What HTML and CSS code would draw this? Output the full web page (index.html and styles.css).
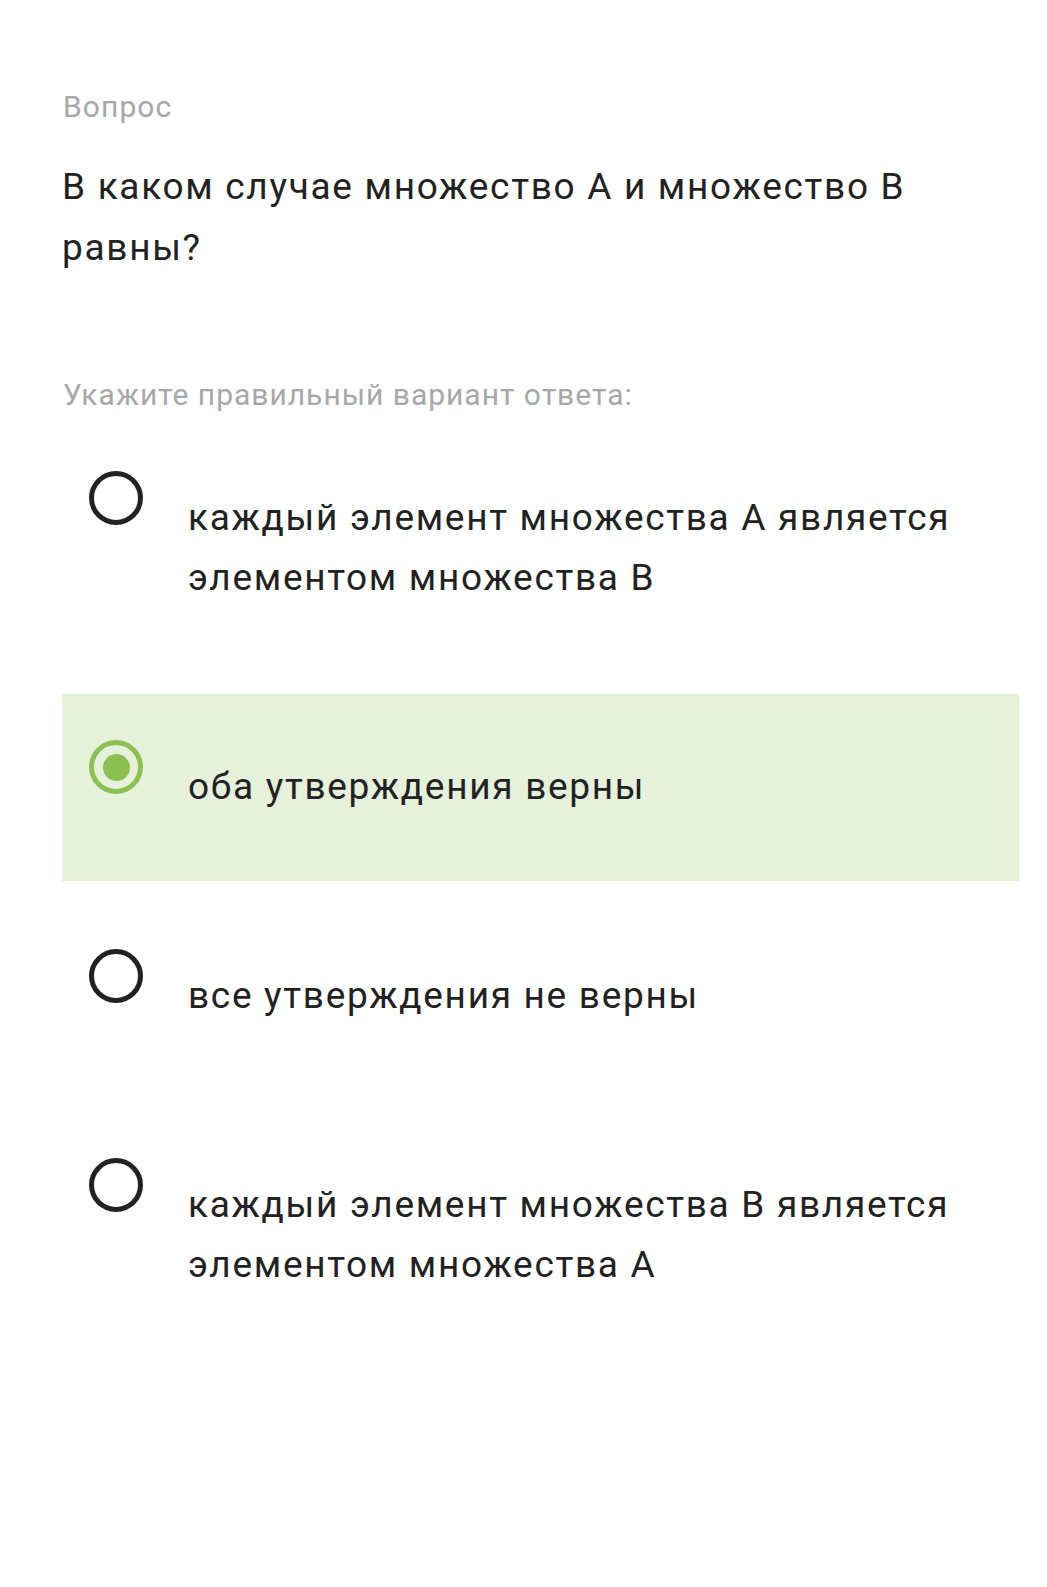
FILE: index.html
```html
<!DOCTYPE html>
<html>
<head>
    <title>Вопрос</title>
    <link rel="stylesheet" href="styles.css">
</head>
<body>
    <div class="page">
        <div class="caption">Вопрос</div>
        <div class="question">В каком случае множество А и множество В равны?</div>
        <div class="hint">Укажите правильный вариант ответа:</div>

        <div class="options">
            <div class="option">
                <span class="radio"></span>
                <div class="option-text">каждый элемент множества А является элементом множества В</div>
            </div>
            <div class="option selected">
                <span class="radio"></span>
                <div class="option-text">оба утверждения верны</div>
            </div>
            <div class="option">
                <span class="radio"></span>
                <div class="option-text">все утверждения не верны</div>
            </div>
            <div class="option">
                <span class="radio"></span>
                <div class="option-text">каждый элемент множества В является элементом множества А</div>
            </div>
        </div>
    </div>
</body>
</html>
```

FILE: styles.css
```css
body {
    margin: 0;
    background: #fff;
    font-family: Roboto, "Noto Sans", sans-serif;
    color: #222;
}
.page {
    padding: 89px 28px 0 62px;
}
.caption {
    font-size: 30px;
    line-height: 36px;
    letter-spacing: 1.1px;
    color: #a8a8a8;
    padding-left: 1px;
}
.question {
    margin-top: 31px;
    font-size: 37px;
    line-height: 61px;
    letter-spacing: 1.7px;
}
.hint {
    margin-top: 99px;
    font-size: 30px;
    line-height: 36px;
    letter-spacing: 1px;
    color: #a8a8a8;
    padding-left: 1px;
}
.options {
    margin-top: 12px;
    display: flex;
    flex-direction: column;
    gap: 22px;
}
.option {
    display: flex;
    align-items: flex-start;
    gap: 45px;
    padding: 46px 20px 64px 27px;
}
.option.selected {
    background-color: #e6f1db;
}
.radio {
    flex: none;
    width: 54px;
    height: 54px;
    box-sizing: border-box;
    border: 5px solid #222;
    border-radius: 50%;
    position: relative;
}
.option.selected .radio {
    border-color: #8cc152;
}
.option.selected .radio::after {
    content: "";
    position: absolute;
    left: 8.5px;
    top: 8.5px;
    width: 27px;
    height: 27px;
    border-radius: 50%;
    background: #8cc152;
}
.option-text {
    margin-top: 17px;
    font-size: 37px;
    line-height: 60px;
    letter-spacing: 1.7px;
}
```
